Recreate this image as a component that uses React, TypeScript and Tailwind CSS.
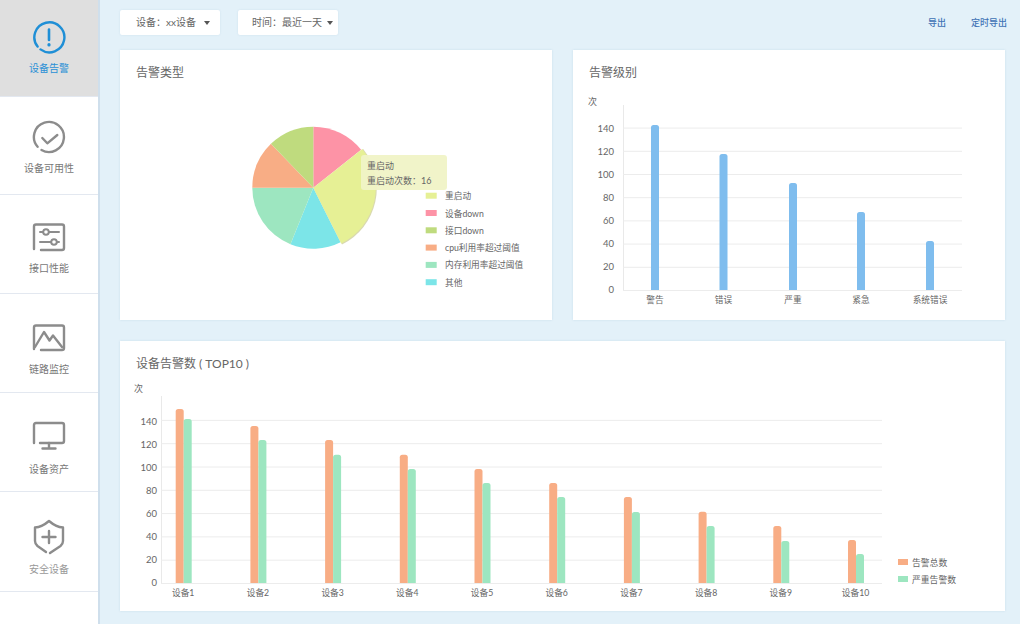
const GRID = [0, 20, 40, 60, 80, 100, 120, 140];

const navItems = [
    { label: '设备告警', icon: 'alert', box: 'h-[97px] pt-[19px] bg-[#dfdfdf]', text: 'mt-[6px] text-[#2a90d6]' },
    { label: '设备可用性', icon: 'check', box: 'h-[98px] pt-[22px]', text: 'mt-[6px] text-[#777]' },
    { label: '接口性能', icon: 'sliders', box: 'h-[99px] pt-[24px]', text: 'mt-[6px] text-[#777]' },
    { label: '链路监控', icon: 'image', box: 'h-[99px] pt-[26px]', text: 'mt-[6px] text-[#777]' },
    { label: '设备资产', icon: 'monitor', box: 'h-[99px] pt-[25px]', text: 'mt-[8px] text-[#777]' },
    { label: '安全设备', icon: 'shield', box: 'h-[100px] pt-[27px]', text: 'mt-[7px] text-[#999]' },
];

function NavIcon({ name }: { name: string }) {
    const color = name === 'alert' ? '#1f8fd6' : '#8c8c8c';
    return (
        <svg viewBox="0 0 36 36" className="w-9 h-9 block" fill="none" stroke={color} strokeWidth="2.4" strokeLinecap="round" strokeLinejoin="round">
            {name === 'alert' && (
                <>
                    <path d="M9.5 30.4A15 15 0 1 0 6.6 27.6" />
                    <path d="M18 10.5V21" strokeWidth="2.6" />
                    <path d="M18 25.6V26" strokeWidth="3.2" />
                </>
            )}
            {name === 'check' && (
                <>
                    <path d="M10.5 31A15 15 0 1 0 6.6 27.8" />
                    <path d="M11.3 19L16.3 24.3L26.3 16" />
                </>
            )}
            {name === 'sliders' && (
                <>
                    <path d="M3 30V7.5Q3 5.5 5 5.5H31Q33 5.5 33 7.5V29Q33 31 31 31H10" />
                    <path d="M9 13H12M18 13H28M9 23H20M26 23H28" strokeWidth="2" />
                    <circle cx="15" cy="13" r="2.8" strokeWidth="2" />
                    <circle cx="23" cy="23" r="2.8" strokeWidth="2" />
                </>
            )}
            {name === 'image' && (
                <>
                    <path d="M3 29V7.5Q3 5.5 5 5.5H31Q33 5.5 33 7.5V28Q33 30 31 30H10" />
                    <path d="M4 27L13 12L18.5 20.5L22 15.5L31 27" />
                </>
            )}
            {name === 'monitor' && (
                <>
                    <path d="M3 25V7Q3 5 5 5H31Q33 5 33 7V23Q33 25 31 25H9" />
                    <path d="M18 25V30M11.5 30.5H24.5" />
                </>
            )}
            {name === 'shield' && (
                <>
                    <path d="M15 33L6.5 27Q4 25 4 22V8.5Q11 8 18 2Q25 8 32 8.5V22Q32 25 29.5 27L19 34" />
                    <path d="M18 12V24M11.5 18H24.5" />
                </>
            )}
        </svg>
    );
}

function Sidebar() {
    return (
        <aside className="w-[100px] shrink-0 h-full bg-white border-r-2 border-[#cfdfec]">
            {navItems.map(item => (
                <div key={item.label} className={`flex flex-col items-center border-b border-[#e3e8f0] ${item.box}`}>
                    <NavIcon name={item.icon} />
                    <span className={`text-[10px] leading-[14px] ${item.text}`}>{item.label}</span>
                </div>
            ))}
        </aside>
    );
}

function Filter({ label, className }: { label: string; className: string }) {
    return (
        <div className={`h-[25px] bg-white rounded-[2px] shadow-[0_0_2px_rgba(150,185,210,0.3)] flex items-center text-[10px] text-[#666] ${className}`}>
            <span>{label}</span>
            <span className="w-0 h-0 border-x-[3px] border-t-[4px] border-x-transparent border-t-[#555] ml-auto" />
        </div>
    );
}

function Card({ title, className, children }: { title: string; className: string; children: React.ReactNode }) {
    return (
        <section className={`relative h-[270px] bg-white shadow-[0_0_2px_rgba(150,185,210,0.35)] ${className}`}>
            <h2 className="h-[40px] pt-[15px] pl-4 text-[12px] leading-[16px] font-normal text-[#666]">{title}</h2>
            {children}
        </section>
    );
}

function polar(cx: number, cy: number, r: number, deg: number) {
    const a = ((deg - 90) * Math.PI) / 180;
    return [cx + r * Math.cos(a), cy + r * Math.sin(a)];
}

function slice(from: number, to: number, r: number) {
    const [x1, y1] = polar(313.3, 187.7, r, from);
    const [x2, y2] = polar(313.3, 187.7, r, to);
    return `M313.3 187.7L${x1} ${y1}A${r} ${r} 0 ${to - from > 180 ? 1 : 0} 1 ${x2} ${y2}Z`;
}

const pieLegend = [
    { name: '重启动', color: '#e6f095' },
    { name: '设备down', color: '#fd93a6' },
    { name: '接口down', color: '#bfdb7e' },
    { name: 'cpu利用率超过阈值', color: '#f8ad85' },
    { name: '内存利用率超过阈值', color: '#9de6c0' },
    { name: '其他', color: '#7ce5e8' },
];

function TypeCard() {
    return (
        <Card title="告警类型" className="w-[432px]">
            <svg viewBox="120 90 432 230" className="w-[432px] h-[230px] block">
                <path d={slice(0, 51.6, 61)} fill="#fd93a6" />
                <path d={slice(153.4, 202, 61)} fill="#7ce5e8" />
                <path d={slice(202, 270, 61)} fill="#9de6c0" />
                <path d={slice(270, 316, 61)} fill="#f8ad85" />
                <path d={slice(316, 360, 61)} fill="#bfdb7e" />
                <path d={slice(51.6, 153.4, 63)} fill="#d9d9b0" transform="translate(0.5 0.5)" />
                <path d={slice(51.6, 153.4, 62.5)} fill="#e6f095" />
                {pieLegend.map((item, i) => (
                    <g key={item.name}>
                        <rect x="425.7" y={192.7 + i * 17.3} width="11" height="6" fill={item.color} />
                        <text x="445" y={199.2 + i * 17.3} fontSize="8.7" fill="#666">{item.name}</text>
                    </g>
                ))}
            </svg>
            <div className="absolute left-[241px] top-[105px] w-[86px] h-[35px] pt-[3px] pl-[6px] rounded-[3px] bg-[#f0f3c6]/95 text-[9px] leading-[15px] text-[#666]">
                <div>重启动</div>
                <div>重启动次数：16</div>
            </div>
        </Card>
    );
}

const levels = [
    { name: '警告', x: 655, top: 125 },
    { name: '错误', x: 723.5, top: 154 },
    { name: '严重', x: 793, top: 183 },
    { name: '紧急', x: 861, top: 212 },
    { name: '系统错误', x: 930, top: 241 },
];

function Bar({ x, top, bottom, color }: { x: number; top: number; bottom: number; color: string }) {
    return (
        <path d={`M${x} ${bottom}V${top + 2.5}Q${x} ${top} ${x + 2.5} ${top}H${x + 5.5}Q${x + 8} ${top} ${x + 8} ${top + 2.5}V${bottom}Z`} fill={color} />
    );
}

function LevelCard() {
    return (
        <Card title="告警级别" className="w-[432px]">
            <svg viewBox="573 90 432 230" className="w-[432px] h-[230px] block">
                <text x="588" y="105" fontSize="9" fill="#666">次</text>
                <path d="M623.5 105V290" stroke="#e9e9e9" fill="none" />
                {GRID.map((v, i) => (
                    <g key={v}>
                        <path d={`M623 ${290.5 - i * 23.2}H962`} stroke="#ececec" fill="none" />
                        <text x="614" y={292.5 - i * 23} fontSize="9.5" fill="#666" textAnchor="end">{v}</text>
                    </g>
                ))}
                {levels.map(b => (
                    <g key={b.name}>
                        <Bar x={b.x - 4} top={b.top} bottom={290} color="#7fbdee" />
                        <text x={b.x} y="302.5" fontSize="8.7" fill="#666" textAnchor="middle">{b.name}</text>
                    </g>
                ))}
            </svg>
        </Card>
    );
}

const totals = [409, 426, 440, 454.7, 469, 483, 497, 511.7, 526, 540];
const severe = [419, 440, 454.7, 469, 483, 497, 512, 526, 541, 554];

function TopCard() {
    return (
        <Card title="设备告警数 ( TOP10 )" className="w-[885px] mt-[21px]">
            <svg viewBox="120 381 885 230" className="w-[885px] h-[230px] block">
                <text x="134" y="392" fontSize="9" fill="#666">次</text>
                <path d="M161.5 396V583" stroke="#e9e9e9" fill="none" />
                {GRID.map((v, i) => (
                    <g key={v}>
                        <path d={`M161 ${583.5 - i * 23.3}H882`} stroke="#ececec" fill="none" />
                        <text x="157" y={585.5 - i * 23} fontSize="9.5" fill="#666" textAnchor="end">{v}</text>
                    </g>
                ))}
                {totals.map((top, i) => {
                    const x = 175.7 + i * 74.7;
                    return (
                        <g key={i}>
                            <Bar x={x} top={top} bottom={583} color="#f8ad85" />
                            <Bar x={x + 8} top={severe[i]} bottom={583} color="#9de6c0" />
                            <text x={x + 7.5} y="595.5" fontSize="8.7" fill="#666" textAnchor="middle">{`设备${i + 1}`}</text>
                        </g>
                    );
                })}
                <rect x="898" y="559" width="10" height="6" fill="#f8ad85" />
                <text x="912" y="565.5" fontSize="8.8" fill="#666">告警总数</text>
                <rect x="898" y="576" width="10" height="6" fill="#9de6c0" />
                <text x="912" y="582.5" fontSize="8.8" fill="#666">严重告警数</text>
            </svg>
        </Card>
    );
}

export default function App() {
    return (
        <div className="w-[1020px] h-[624px] flex overflow-hidden bg-[#e3f1f9] font-['Lato','Noto_Sans_CJK_SC',sans-serif]">
            <Sidebar />
            <main className="flex-1 pl-[20px] pr-[15px] pt-[10px]">
                <div className="flex items-center gap-[18px] h-[25px] mb-[15px]">
                    <Filter label="设备：xx设备" className="w-[100px] pl-[16px] pr-[10px]" />
                    <Filter label="时间：最近一天" className="w-[100px] pl-[14px] pr-[5px]" />
                    <div className="ml-auto -mr-[2px] flex gap-[25px] text-[9px] font-medium text-[#3f72b5]">
                        <span>导出</span>
                        <span>定时导出</span>
                    </div>
                </div>
                <div className="flex justify-between">
                    <TypeCard />
                    <LevelCard />
                </div>
                <TopCard />
            </main>
        </div>
    );
}
